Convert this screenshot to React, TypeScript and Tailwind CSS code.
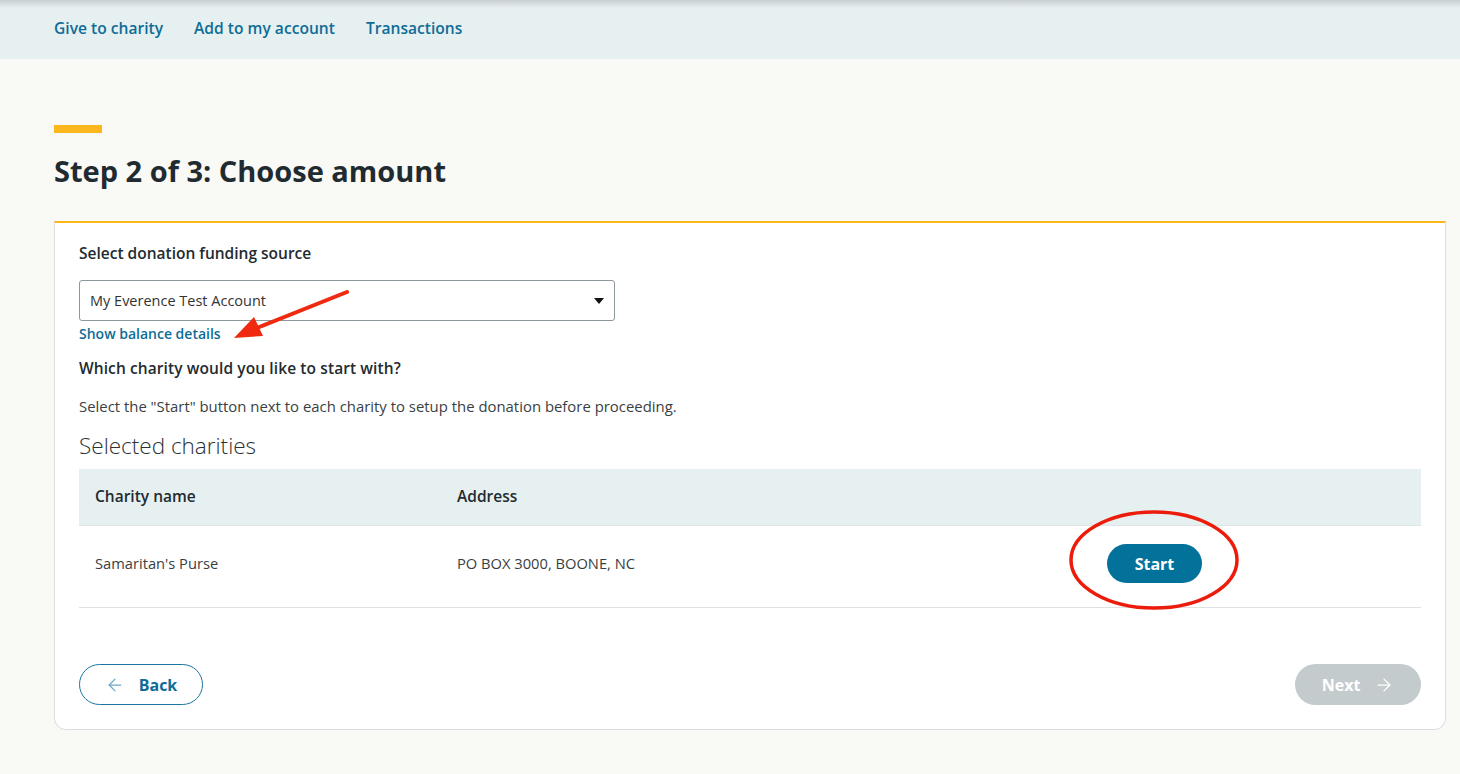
import { ArrowLeft, ArrowRight } from 'lucide-react'

const font = { fontFamily: '"Open Sans", "Noto Sans", "Liberation Sans", sans-serif' }

function TopNav() {
  return (
    <nav className="relative h-[59px] bg-[#e7f0f1] flex items-center gap-[31px] px-[54px]">
      <div className="absolute inset-x-0 top-0 h-[8px] bg-gradient-to-b from-[#c9cfd1] to-transparent" />
      <a className="text-[15.6px] font-semibold text-[#0e6d97] -mt-[2px]">Give to charity</a>
      <a className="text-[15.6px] font-semibold text-[#0e6d97] -mt-[2px]">Add to my account</a>
      <a className="text-[15.6px] font-semibold text-[#0e6d97] -mt-[2px]">Transactions</a>
    </nav>
  )
}

function Annotations() {
  return (
    <svg className="absolute inset-0 pointer-events-none" width="1460" height="774">
      <line x1="347" y1="292" x2="252" y2="330" stroke="#f02a10" strokeWidth="4" strokeLinecap="round" />
      <polygon points="234,338 254,317 263,336" fill="#f02a10" />
      <ellipse cx="1154" cy="560" rx="83" ry="48" fill="none" stroke="#ec1c0c" strokeWidth="3.5" />
    </svg>
  )
}

export default function App() {
  return (
    <div className="relative w-[1460px] h-[774px] bg-[#f9f9f6] text-[#222b30] overflow-hidden" style={font}>
      <TopNav />
      <div className="px-[54px] pr-[14px]">
        <div className="mt-[66px] w-[48px] h-[8px] bg-[#fbb71c]" />
        <h1 className="mt-[21px] text-[29px] leading-[34px] font-bold text-[#1f2b30]">
          Step 2 of 3: Choose amount
        </h1>
        <div className="mt-[33px] bg-white border-t-2 border-t-[#fbb71c] border-x border-b border-x-[#dedede] border-b-[#dedede] rounded-b-[12px] px-[24px] pt-[20px] pb-[24px] h-[509px]">
          <p className="text-[15.5px] leading-[20px] font-semibold">Select donation funding source</p>
          <div className="mt-[17px] w-[536px] h-[41px] border border-[#8d979c] rounded-[3px] flex items-center justify-between pl-[10px] pr-[10px]">
            <span className="text-[14.5px] text-[#333]">My Everence Test Account</span>
            <svg width="10" height="6" viewBox="0 0 10 6"><polygon points="0,0 10,0 5,6" fill="#111" /></svg>
          </div>
          <a className="block mt-[4px] text-[14px] leading-[18px] font-semibold text-[#0e6d97]">Show balance details</a>
          <p className="mt-[15px] text-[15.5px] leading-[20px] font-semibold tracking-[0.1px]">Which charity would you like to start with?</p>
          <p className="mt-[18px] text-[14.9px] leading-[20px] text-[#3a3f42]">
            Select the "Start" button next to each charity to setup the donation before proceeding.
          </p>
          <h2 className="mt-[15px] text-[22.5px] leading-[30px] font-light text-[#2a3236]">Selected charities</h2>
          <div className="mt-[8px]">
            <div className="flex items-center h-[57px] bg-[#e7f0f1] border-b border-[#dfe4e5]">
              <div className="w-[378px] pl-[16px] text-[15.5px] font-semibold">Charity name</div>
              <div className="text-[15.5px] font-semibold">Address</div>
            </div>
            <div className="flex items-center h-[82px] pb-[6px] border-b border-[#dfe1e2]">
              <div className="w-[378px] pl-[16px] text-[14.7px] text-[#3a3f42]">Samaritan's Purse</div>
              <div className="w-[650px] text-[14.7px] text-[#3a3f42]">PO BOX 3000, BOONE, NC</div>
              <button className="w-[95px] h-[39px] rounded-full bg-[#02729b] text-white text-[16px] font-bold">Start</button>
            </div>
          </div>
          <div className="mt-[56px] flex justify-between">
            <button className="w-[124px] h-[41px] rounded-full border-[1.5px] border-[#1a76a0] flex items-center justify-center gap-[14px] text-[#0e6d97] text-[16px] font-bold">
              <ArrowLeft className="w-[20px] h-[20px] text-[#6aa9c4]" strokeWidth={1.5} />
              Back
            </button>
            <button className="w-[126px] h-[41px] rounded-full bg-[#c4cbcc] flex items-center justify-center gap-[14px] text-white text-[16px] font-bold">
              Next
              <ArrowRight className="w-[20px] h-[20px]" strokeWidth={1.5} />
            </button>
          </div>
        </div>
      </div>
      <Annotations />
    </div>
  )
}
